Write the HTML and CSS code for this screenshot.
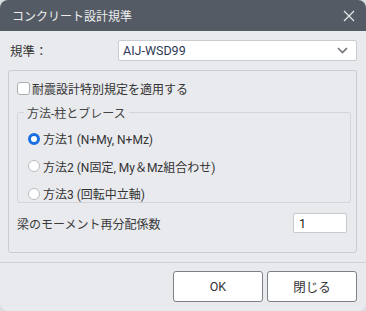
FILE: index.html
```html
<!DOCTYPE html>
<html lang="ja">

<head>
    <meta charset="UTF-8">
    <meta name="viewport" content="width=device-width, initial-scale=1.0">
    <title>コンクリート設計規準</title>
    <link rel="stylesheet" href="styles.css">
</head>

<body>
    <div id="dialog">
        <div class="titlebar">
            <span class="title">コンクリート設計規準</span>
            <span class="close">
                <svg width="12" height="12" viewBox="0 0 12 12">
                    <path d="M1 1 L11 11 M11 1 L1 11" stroke="#e8e9eb" stroke-width="1.2" fill="none" />
                </svg>
            </span>
        </div>
        <div class="content">
            <div class="row code">
                <label for="code">規準：</label>
                <div class="select">
                    <span>AIJ-WSD99</span>
                    <svg width="11" height="7" viewBox="0 0 11 7">
                        <path d="M1 1 L5.5 5.5 L10 1" stroke="#6f7378" stroke-width="1.6" fill="none" />
                    </svg>
                </div>
            </div>
            <div class="group">
                <label class="check">
                    <input type="checkbox">
                    <span>耐震設計特別規定を適用する</span>
                </label>
                <fieldset>
                    <legend>方法-柱とブレース</legend>
                    <label class="radio">
                        <input type="radio" name="method" checked>
                        <span>方法1 (N+My, N+Mz)</span>
                    </label>
                    <label class="radio">
                        <input type="radio" name="method">
                        <span>方法2 (N固定, My＆Mz組合わせ)</span>
                    </label>
                    <label class="radio">
                        <input type="radio" name="method">
                        <span>方法3 (回転中立軸)</span>
                    </label>
                </fieldset>
                <div class="row factor">
                    <label for="factor">梁のモーメント再分配係数</label>
                    <input type="text" id="factor" value="1">
                </div>
            </div>
        </div>
        <div class="buttons">
            <button>OK</button>
            <button>閉じる</button>
        </div>
    </div>
</body>

</html>
```

FILE: styles.css
```css
* {
    box-sizing: border-box;
    margin: 0;
    padding: 0;
}
body {
    background-color: #dcdde0;
    font-family: Roboto, "Noto Sans CJK JP", sans-serif;
    font-size: 12px;
    color: #333;
}
#dialog {
    width: 366px;
    height: 311px;
    background-color: #e9eaee;
    border-radius: 8px;
    overflow: hidden;
    display: flex;
    flex-direction: column;
}
.titlebar {
    height: 31px;
    background-color: #545b64;
    color: #eceef0;
    display: flex;
    align-items: center;
    justify-content: space-between;
    padding: 0 11px 0 12px;
    font-size: 12px;
}
.close {
    display: flex;
}
.content {
    padding: 0 9px 0 8px;
}
.row {
    display: flex;
    align-items: center;
    justify-content: space-between;
}
.code {
    height: 39px;
    padding-left: 2px;
}
.code label {
    font-size: 12.5px;
}
.select {
    width: 239px;
    height: 21px;
    background-color: #fff;
    border: 1px solid #c9ccd1;
    border-radius: 2px;
    display: flex;
    align-items: center;
    justify-content: space-between;
    padding: 0 8px 0 4px;
    color: #2e3a55;
    font-size: 12.5px;
}
.group {
    border: 1px solid #c8cbd0;
    border-radius: 3px;
    height: 183px;
    padding: 0 5px 0 8px;
}
.check {
    display: flex;
    align-items: center;
    height: 33px;
    padding-top: 2px;
}
.check input {
    appearance: none;
    width: 13px;
    height: 13px;
    border: 1px solid #a9adb3;
    border-radius: 3px;
    background-color: #fff;
    margin-right: 2px;
}
fieldset {
    border: 1px solid #d2d4d8;
    border-radius: 3px;
    padding: 4px 0 0 10px;
    height: 99px;
}
legend {
    padding: 0 3px;
    margin-left: -4px;
    color: #444;
}
.radio {
    display: flex;
    align-items: center;
    height: 27.5px;
}
.radio input {
    appearance: none;
    width: 12px;
    height: 12px;
    border: 1px solid #b9bcc1;
    border-radius: 50%;
    background-color: #fff;
    margin-right: 3px;
}
.radio input:checked {
    border: 3.5px solid #1a6fe0;
}
.factor {
    height: 38px;
    padding: 2px 4px 0 0;
    color: #3a3a3a;
}
.factor input {
    width: 54px;
    height: 20px;
    border: 1px solid #c6c9ce;
    border-radius: 2px;
    padding-left: 5px;
    font-family: inherit;
    font-size: 12.5px;
    color: #222;
}
.buttons {
    margin-top: 9px;
    border-top: 1px solid #cfd1d5;
    padding: 8px 9px 0 0;
    display: flex;
    justify-content: flex-end;
    gap: 4px;
}
button {
    width: 90px;
    height: 31px;
    background-color: #fff;
    border: 1px solid #7d8085;
    border-radius: 3px;
    font-family: inherit;
    font-size: 12.5px;
    color: #333;
}
```
